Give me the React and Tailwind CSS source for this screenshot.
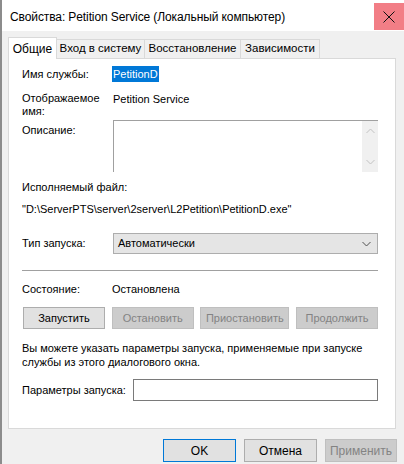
import React from "react";

const font = { fontFamily: '"Liberation Sans", Arial, sans-serif' };

const Chevron = ({ up, className }) => (
  <svg className={className} width="9" height="6" viewBox="0 0 9 6" fill="none">
    <path
      d={up ? "M0.5 5L4.5 1L8.5 5" : "M0.5 1L4.5 5L8.5 1"}
      stroke="currentColor"
      strokeWidth="1"
    />
  </svg>
);

const Btn = ({ children, disabled, width = "w-[82px]" }) => (
  <button
    type="button"
    className={`${width} h-[22px] border text-[11px] ${
      disabled
        ? "bg-[#cccccc] border-[#bfbfbf] text-[#838383]"
        : "bg-[#e1e1e1] border-[#adadad] text-black"
    }`}
  >
    {children}
  </button>
);

export default function App() {
  return (
    <div
      className="w-[404px] h-[464px] bg-[#f0f0f0] overflow-hidden flex flex-col text-[11px] text-black border-l-2 border-[#8c8c8c]"
      style={font}
    >
      {/* title bar */}
      <div className="h-[31px] bg-white flex justify-between shrink-0">
        <div className="pl-[8px] pt-[10px] text-[12px] leading-[14px] tracking-[-0.1px]">
          Свойства: Petition Service (Локальный компьютер)
        </div>
        <div className="w-[30px] h-[27px] mt-[3px] bg-[#f27e86] flex items-center justify-center">
          <svg width="12" height="12" viewBox="0 0 12 12">
            <path d="M0.5 0.5L11.5 11.5M11.5 0.5L0.5 11.5" stroke="#111" strokeWidth="1" />
          </svg>
        </div>
      </div>

      {/* tabs */}
      <div className="flex items-end mt-[6px] pl-[6px] h-[22px] shrink-0 relative z-10 text-[11.5px]">
        <div className="w-[49px] h-[22px] bg-white border border-b-0 border-[#d9d9d9] flex items-center justify-center text-[12px]">
          Общие
        </div>
        <div className="w-[88px] h-[20px] border border-l-0 border-[#d9d9d9] flex items-center justify-center">
          Вход в систему
        </div>
        <div className="w-[96px] h-[20px] border border-l-0 border-[#d9d9d9] flex items-center justify-center">
          Восстановление
        </div>
        <div className="w-[79px] h-[20px] border border-l-0 border-[#d9d9d9] flex items-center justify-center">
          Зависимости
        </div>
      </div>

      {/* panel */}
      <div className="ml-[6px] w-[388px] h-[371px] -mt-px bg-white border border-[#d9d9d9] pl-[13px] pr-[17px] shrink-0">
        <div className="flex items-center h-[16px] mt-[7px]">
          <div className="w-[90px]">Имя службы:</div>
          <span className="bg-[#0078d7] text-white h-[16px] leading-[16px] px-[1px]">PetitionD</span>
        </div>

        <div className="flex mt-[10px] leading-[13px]">
          <div className="w-[91px]">
            Отображаемое
            <br />
            имя:
          </div>
          <div className="pt-[1px]">Petition Service</div>
        </div>

        <div className="flex mt-[2px]">
          <div className="w-[91px] pt-[4px] leading-[13px]">Описание:</div>
          <div className="flex-1 h-[52px] border-t border-l border-[#a0a0a0] flex justify-end">
            <div className="w-[16px] h-full bg-[#f0f0f0] flex flex-col items-center justify-between py-[7px] text-[#c2c2c2]">
              <Chevron up />
              <Chevron />
            </div>
          </div>
        </div>

        <div className="mt-[9px] leading-[13px]">Исполняемый файл:</div>
        <div className="mt-[9px] leading-[13px]">"D:\ServerPTS\server\2server\L2Petition\PetitionD.exe"</div>

        <div className="flex items-center mt-[17px]">
          <div className="w-[91px]">Тип запуска:</div>
          <div className="flex-1 h-[21px] bg-[#e5e5e5] border border-[#adadad] flex items-center justify-between pl-[4px] pr-[6px]">
            <span>Автоматически</span>
            <Chevron className="text-[#505050]" />
          </div>
        </div>

        <div className="mt-[16px] h-px bg-[#a0a0a0]" />

        <div className="flex mt-[12px] leading-[13px]">
          <div className="w-[90px]">Состояние:</div>
          <div>Остановлена</div>
        </div>

        <div className="flex justify-between mt-[11px] pl-px">
          <Btn>Запустить</Btn>
          <Btn disabled>Остановить</Btn>
          <Btn disabled width="w-[89px]">Приостановить</Btn>
          <Btn disabled>Продолжить</Btn>
        </div>

        <div className="mt-[12px] leading-[14px]">
          Вы можете указать параметры запуска, применяемые при запуске
          <br />
          службы из этого диалогового окна.
        </div>

        <div className="flex items-center mt-[10px]">
          <div className="w-[111px]">Параметры запуска:</div>
          <div className="flex-1 h-[22px] bg-white border border-[#7a7a7a]" />
        </div>
      </div>

      {/* dialog buttons */}
      <div className="flex justify-end gap-[8px] mt-[10px] pr-[7px]">
        <button type="button" className="w-[73px] h-[23px] bg-[#e1e1e1] border border-[#0078d7] text-[12px]">
          OK
        </button>
        <button type="button" className="w-[73px] h-[23px] bg-[#e1e1e1] border border-[#adadad] text-[12px]">
          Отмена
        </button>
        <button type="button" className="w-[72px] h-[23px] bg-[#cccccc] border border-[#bfbfbf] text-[#838383] text-[12px]">
          Применить
        </button>
      </div>
    </div>
  );
}
